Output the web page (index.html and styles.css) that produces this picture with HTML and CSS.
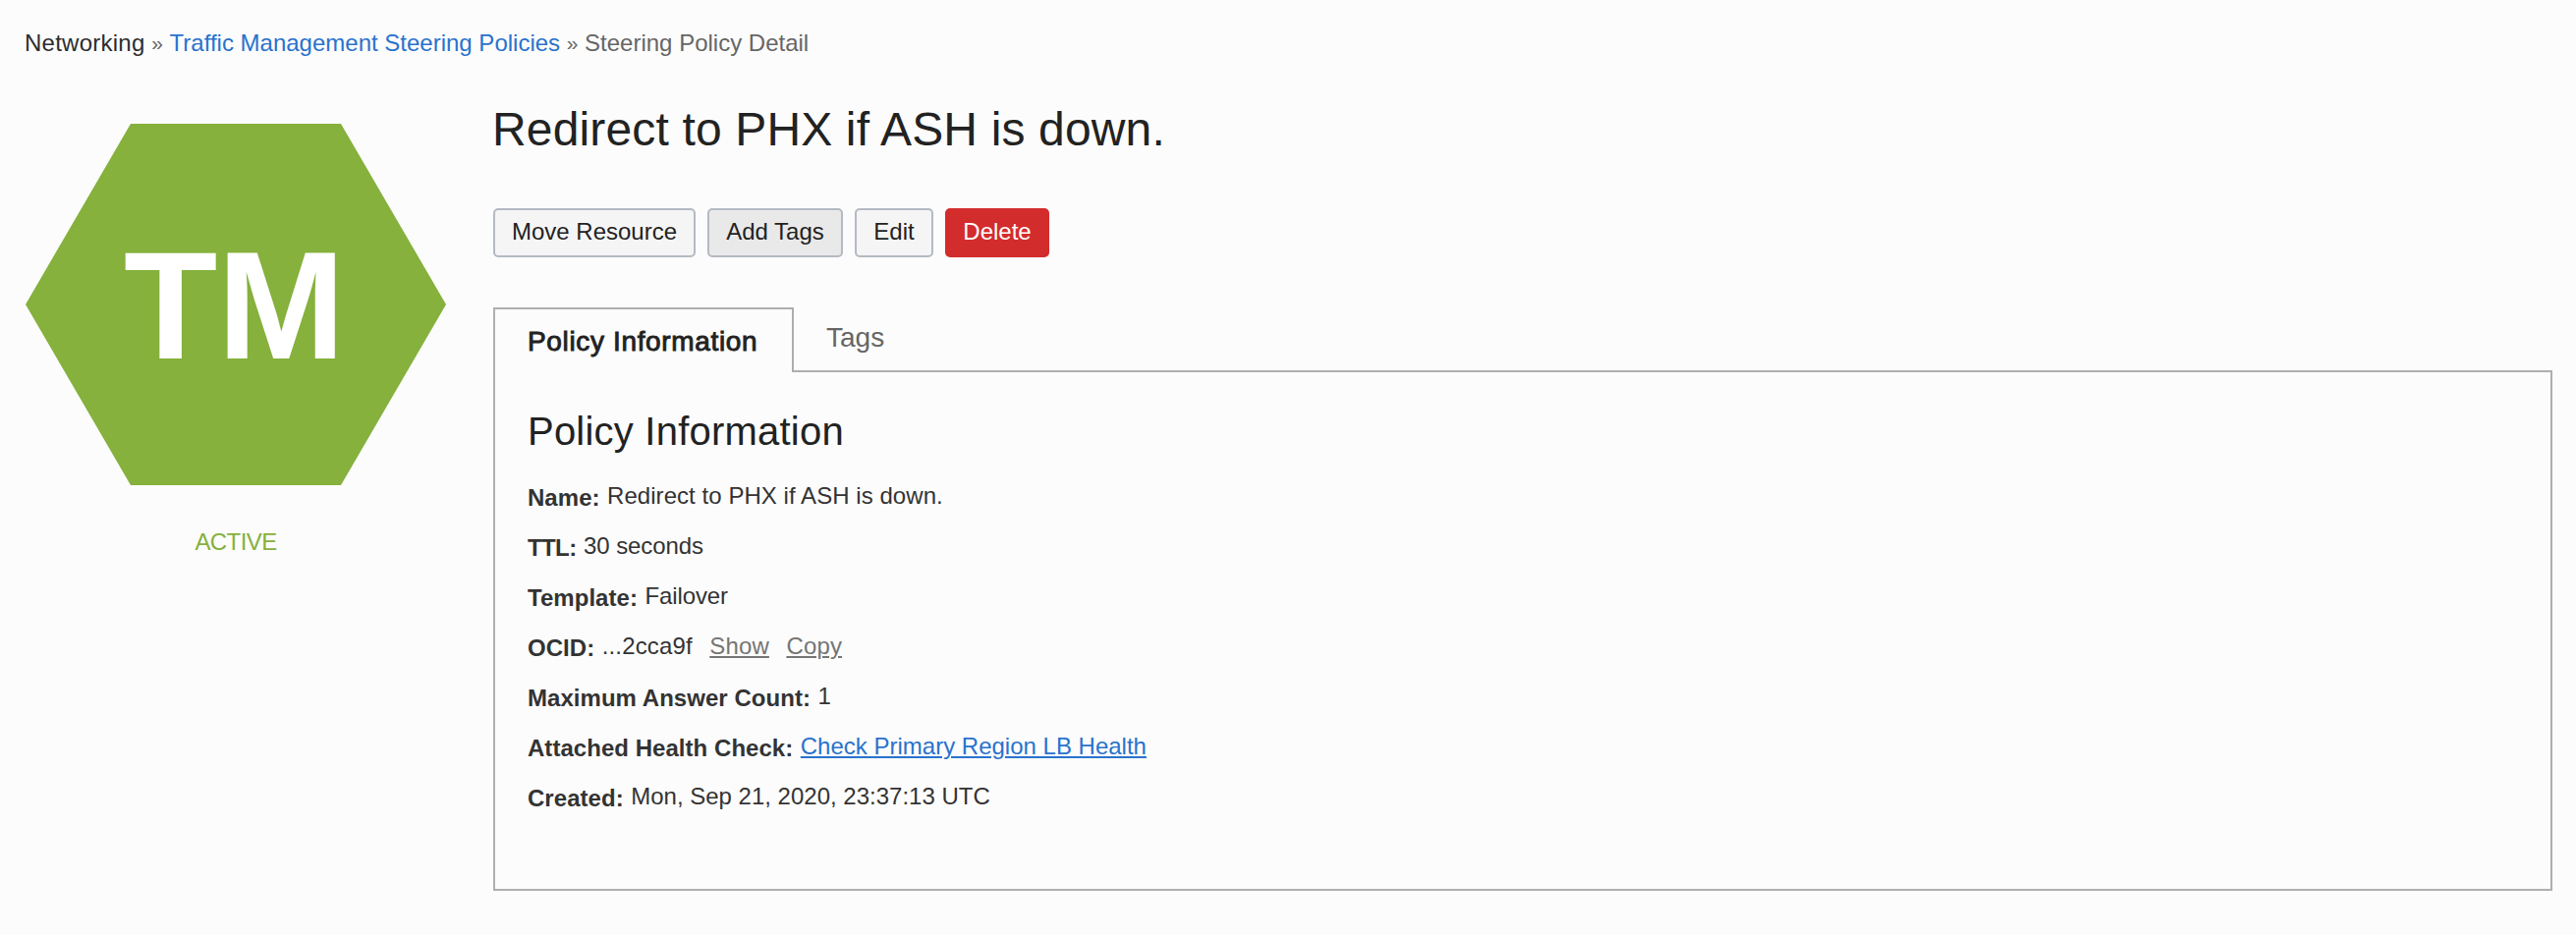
FILE: index.html
```html
<!DOCTYPE html>
<html lang="en">
<head>
<meta charset="utf-8">
<title>Steering Policy Detail</title>
<link rel="stylesheet" href="styles.css">
</head>
<body>
<nav class="breadcrumb"><span class="crumb-root">Networking</span><span class="sep">»</span><a class="crumb-link" href="#">Traffic Management Steering Policies</a><span class="sep">»</span><span>Steering Policy Detail</span></nav>
<div class="layout">
  <aside class="status">
    <div class="hexagon"><span class="initials">TM</span></div>
    <div class="state">ACTIVE</div>
  </aside>
  <main class="detail">
    <h1 class="title">Redirect to PHX if ASH is down.</h1>
    <div class="actions">
      <button class="btn move">Move Resource</button>
      <button class="btn add">Add Tags</button>
      <button class="btn edit">Edit</button>
      <button class="btn delete">Delete</button>
    </div>
    <div class="tabs">
      <div class="tab active">Policy Information</div>
      <div class="tab">Tags</div>
    </div>
    <section class="panel">
      <h2 class="panel-title">Policy Information</h2>
      <div class="row"><b class="label">Name:</b><span class="value wide">Redirect to PHX if ASH is down.</span></div>
      <div class="row"><b class="label ttl">TTL:</b><span class="value tight">30 seconds</span></div>
      <div class="row"><b class="label">Template:</b><span class="value tight">Failover</span></div>
      <div class="row"><b class="label">OCID:</b><span class="value ocid">...2cca9f</span><a class="value action" href="#">Show</a><a class="value action" href="#">Copy</a></div>
      <div class="row"><b class="label">Maximum Answer Count:</b><span class="value">1</span></div>
      <div class="row"><b class="label">Attached Health Check:</b><a class="value link" href="#">Check Primary Region LB Health</a></div>
      <div class="row"><b class="label">Created:</b><span class="value">Mon, Sep 21, 2020, 23:37:13 UTC</span></div>
    </section>
  </main>
</div>
</body>
</html>
```
FILE: styles.css
```css
* { box-sizing: border-box; }

body {
  margin: 0;
  background: #fcfcfc;
  color: #333;
  font: 24px/36px "Liberation Sans", Arial, sans-serif;
}

a { text-decoration: none; }

.breadcrumb {
  display: flex;
  padding: 26px 25px 0;
  height: 112px;
  color: #666;
  white-space: nowrap;
}
.sep { width: 25px; text-align: center; font-size: 21px; }
.crumb-root { color: #2d2d2d; letter-spacing: 0.25px; }
.crumb-link, .link { color: #2a72cc; }

.layout {
  display: flex;
  gap: 47px;
  padding: 0 24px 0 26px;
}

.status { width: 428px; padding-top: 14px; }
.hexagon {
  height: 368px;
  background: #85b13c;
  clip-path: polygon(25% 0, 75% 0, 100% 50%, 75% 100%, 25% 100%, 0 50%);
  padding: 75px 0 0 100px;
}
.initials {
  color: #fff;
  font-weight: bold;
  font-size: 156px;
  line-height: 220px;
}
.state {
  margin-top: 40px;
  color: #85b13c;
  text-align: center;
  letter-spacing: -0.6px;
}

.detail { flex: 1; color: #222; padding-left: 1px; }
.title {
  margin: 0 0 0 -1px;
  height: 100px;
  font-size: 48px;
  font-weight: normal;
  line-height: 40px;
  letter-spacing: 0.15px;
}

.actions { display: flex; gap: 12px; }
.btn {
  height: 50px;
  padding: 0 0 2px;
  border: 2px solid #b4bac2;
  border-radius: 5px;
  background: #f5f5f5;
  color: #222;
  font: inherit;
  line-height: 44px;
}
.move { width: 206px; }
.add { width: 138px; background: #e9e9e9; }
.edit { width: 80px; }
.delete { width: 106px; background: #d32c2c; border-color: #d32c2c; color: #fff; }

.tabs { display: flex; margin-top: 51px; height: 64px; }
.tab {
  padding: 11px 0 0 33px;
  font-size: 28px;
  line-height: 40px;
  color: #666;
}
.tab.active {
  position: relative;
  width: 306px;
  height: 66px;
  padding-top: 12.5px;
  border: 2px solid #aeaeae;
  border-bottom: 0;
  background: #fcfcfc;
  color: #222;
  letter-spacing: 0.65px;
  -webkit-text-stroke: 0.9px #222;
}

.panel {
  height: 530px;
  padding: 34px 33px;
  border: 2px solid #aeaeae;
  color: #333;
}
.panel-title {
  margin: 0 0 14px;
  color: #222;
  font-size: 40px;
  font-weight: normal;
  line-height: 52px;
  letter-spacing: 0.22px;
}
.row { display: flex; height: 51px; line-height: 51px; }
.label { margin-right: 7.5px; padding-top: 2px; letter-spacing: 0.04px; }
.ttl { letter-spacing: -0.6px; }
.wide { letter-spacing: 0.05px; }
.tight { letter-spacing: -0.1px; }
.ocid { letter-spacing: 0.15px; }
.action { margin-left: 17.5px; color: #757575; letter-spacing: 0.15px; }
.action, .link { text-decoration: underline; text-decoration-thickness: 2px; text-underline-offset: 2px; }
```
